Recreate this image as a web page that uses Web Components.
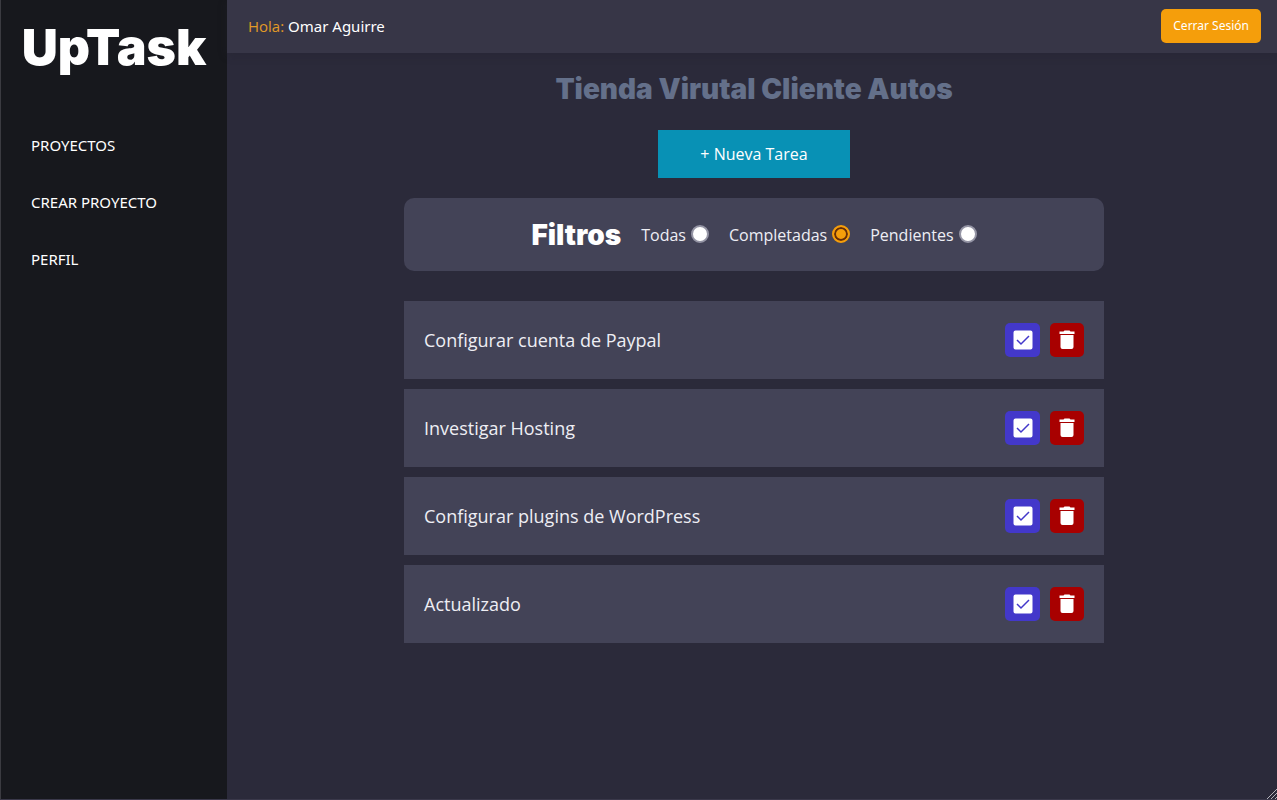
<!DOCTYPE html>
<html lang="es">
<head>
<meta charset="utf-8">
<meta name="viewport" content="width=device-width, initial-scale=1">
<title>UpTask</title>
<style>
html, body { margin: 0; height: 100%; }
body { background: #2b2a3a; color: #fff; font: 16px/22px "Open Sans", sans-serif; --medium: "Noto Sans", sans-serif; }
</style>
</head>
<body>
<up-app>
  <up-sidebar slot="sidebar">
    <up-nav-link href="#proyectos">Proyectos</up-nav-link>
    <up-nav-link href="#crear">Crear Proyecto</up-nav-link>
    <up-nav-link href="#perfil">Perfil</up-nav-link>
  </up-sidebar>
  <up-topbar slot="topbar">Omar Aguirre</up-topbar>
  <up-project name="Tienda Virutal Cliente Autos">
    <up-task>Configurar cuenta de Paypal</up-task>
    <up-task>Investigar Hosting</up-task>
    <up-task>Configurar plugins de WordPress</up-task>
    <up-task>Actualizado</up-task>
  </up-project>
</up-app>
<script>
class UpElement extends HTMLElement {
  constructor() {
    super();
    this.attachShadow({ mode: 'open' }).innerHTML = this.constructor.markup;
  }
}

customElements.define('up-app', class extends UpElement {
  static markup = `
    <style>
      :host { display: grid; grid-template-columns: 226px 1fr; min-height: 100vh; position: relative;
        box-sizing: border-box; border-left: 1px solid #3b3b41; border-bottom: 1px solid #3a384a; }
      .content { min-width: 0; }
      main { padding-left: 4px; }
      .grip { position: absolute; right: 0; bottom: 0; width: 10px; height: 10px; }
    </style>
    <slot name="sidebar"></slot>
    <div class="content"><slot name="topbar"></slot><main><slot></slot></main></div>
    <svg class="grip" viewBox="0 0 10 10" aria-hidden="true" stroke="#b4b4bb" stroke-width="1"><path d="M0 10L10 0M4 10l6-6M8 10l2-2"/></svg>`;
});

customElements.define('up-sidebar', class extends UpElement {
  static markup = `
    <style>
      :host { display: block; background: #17181d; }
      h1 { margin: 0; padding: 17px 0 0; font: 900 50px/60px Inter, sans-serif; text-align: center; }
      nav { display: grid; gap: 17px; padding-top: 48px; }
    </style>
    <aside><h1>UpTask</h1><nav><slot></slot></nav></aside>`;
});

customElements.define('up-nav-link', class extends UpElement {
  static markup = `
    <style>
      :host { display: block; }
      a { display: block; padding: 10px 30px; font: 15px/20px var(--medium); color: #fff;
        text-decoration: none; text-transform: uppercase; }
    </style>
    <a><slot></slot></a>`;
  connectedCallback() { this.shadowRoot.querySelector('a').href = this.getAttribute('href'); }
});

customElements.define('up-topbar', class extends UpElement {
  static markup = `
    <style>
      :host { display: block; background: #373647; box-shadow: 0 2px 8px #23222f66; }
      header { display: flex; align-items: center; justify-content: space-between; box-sizing: border-box;
        height: 53px; padding: 0 16px 1px 21px; }
      p { margin: 0; font: 15px/20px var(--medium); }
      p span { color: #e29a26; font-family: "Open Sans", sans-serif; }
      button { border: 0; border-radius: 5px; padding: 9px 12px; background: #f59e0b; color: #fff;
        font: 12px/16px var(--medium); }
    </style>
    <header><p><span>Hola:</span> <slot></slot></p><button type="button">Cerrar Sesión</button></header>`;
});

customElements.define('up-project', class extends UpElement {
  static markup = `
    <style>
      :host { display: block; padding: 19px 0; }
      h2 { margin: 0; font: 900 28px/34px Inter, sans-serif; color: #64708a; text-align: center; }
      .new { display: block; margin: 24px auto 20px; padding: 13px 42px; border: 0; background: #0891b5;
        color: #fff; font: 500 16px/22px "Open Sans", sans-serif; }
      .list { display: grid; gap: 10px; max-width: 700px; margin: 30px auto 0; }
    </style>
    <h2></h2>
    <button class="new" type="button">+ Nueva Tarea</button>
    <up-filters></up-filters>
    <div class="list"><slot></slot></div>`;
  connectedCallback() { this.shadowRoot.querySelector('h2').textContent = this.getAttribute('name'); }
});

customElements.define('up-filters', class extends UpElement {
  static markup = `
    <style>
      :host { display: block; max-width: 700px; margin: 0 auto; border-radius: 10px; background: #434357; }
      form { display: flex; justify-content: center; align-items: center; gap: 20px; height: 73px; }
      h3 { margin: 0; font: 900 28px/34px Inter, sans-serif; }
      label { display: flex; align-items: center; gap: 5px; color: #eeeef4; }
      input { appearance: none; box-sizing: border-box; width: 18px; height: 18px; margin: 0 0 2px;
        border: 2px solid #9494a4; border-radius: 50%; background: #fff; }
      input:checked { border-color: #f59e0b; background: #f59e0b; box-shadow: inset 0 0 0 2px #672e08; }
    </style>
    <form>
      <h3>Filtros</h3>
      <label for="todas">Todas <input id="todas" type="radio" name="filtro"></label>
      <label for="completadas">Completadas <input id="completadas" type="radio" name="filtro" checked></label>
      <label for="pendientes">Pendientes <input id="pendientes" type="radio" name="filtro"></label>
    </form>`;
});

customElements.define('up-task', class extends UpElement {
  static markup = `
    <style>
      :host { display: flex; align-items: center; justify-content: space-between; height: 78px;
        padding: 0 20px; background: #434357; }
      p { margin: 0; font-size: 18px; line-height: 24px; color: #eeeef4; }
      div { display: flex; gap: 10px; }
      button { display: grid; place-items: center; width: 35px; height: 34px; padding: 0; border: 0;
        border-radius: 5px; background: #4338ca; color: #fff; }
      .delete { width: 34px; background: #a80000; }
      svg { display: block; width: 24px; height: 24px; }
    </style>
    <p><slot></slot></p>
    <div>
      <button type="button" aria-label="Completar"><svg viewBox="0 0 24 24" fill="currentColor"><path d="M19.500 2.500h-15a2 2 0 0 0-2 2v15a2 2 0 0 0 2 2h15a2 2 0 0 0 2-2v-15a2 2 0 0 0-2-2z"/><path d="M6 12l4 4 8-8" fill="none" stroke="#4338ca" stroke-width="1.500"/></svg></button>
      <button class="delete" type="button" aria-label="Eliminar"><svg viewBox="0 0 24 24" fill="currentColor"><path d="M5.500 19a2 2 0 0 0 2 2h9a2 2 0 0 0 2-2V7h-13v12zM19.500 3.500h-4l-1-1h-5l-1 1h-4V6h15V3.500z"/></svg></button>
    </div>`;
});
</script>
</body>
</html>
